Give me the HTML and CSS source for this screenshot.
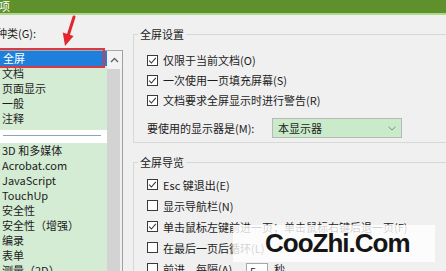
FILE: index.html
```html
<!DOCTYPE html>
<html lang="zh-CN">
<head>
<meta charset="utf-8">
<title>选项</title>
<link rel="stylesheet" href="styles.css">
</head>
<body>
<div class="titlebar"><span class="title">选项</span></div>
<div class="main">
  <div class="left">
    <div class="cat-label">种类(G):</div>
    <div class="listbox">
      <ul class="items">
        <li class="sel">全屏</li>
        <li>文档</li>
        <li>页面显示</li>
        <li>一般</li>
        <li>注释</li>
        <li class="sep"></li>
        <li>3D 和多媒体</li>
        <li>Acrobat.com</li>
        <li>JavaScript</li>
        <li>TouchUp</li>
        <li>安全性</li>
        <li>安全性（增强）</li>
        <li>编录</li>
        <li>表单</li>
        <li>测量（2D）</li>
      </ul>
      <div class="scrollbar">
        <div class="sb-up"><svg width="9" height="6" viewBox="0 0 9 6"><polyline points="1,5 4.5,1.5 8,5" fill="none" stroke="#606060" stroke-width="1.3"/></svg></div>
        <div class="sb-thumb"></div>
      </div>
    </div>
  </div>
  <div class="right">
    <fieldset class="group g1">
      <legend>全屏设置</legend>
      <div class="rows">
        <div class="row"><span class="cb"><svg width="11" height="11" viewBox="0 0 11 11"><rect x=".5" y=".5" width="10" height="10" fill="#fff" stroke="#3a3a3a"/><polyline points="2.2,5.6 4.4,8 8.8,2.8" fill="none" stroke="#3a3a3a" stroke-width="1.1"/></svg></span>仅限于当前文档(O)</div>
        <div class="row"><span class="cb"><svg width="11" height="11" viewBox="0 0 11 11"><rect x=".5" y=".5" width="10" height="10" fill="#fff" stroke="#3a3a3a"/><polyline points="2.2,5.6 4.4,8 8.8,2.8" fill="none" stroke="#3a3a3a" stroke-width="1.1"/></svg></span>一次使用一页填充屏幕(S)</div>
        <div class="row"><span class="cb"><svg width="11" height="11" viewBox="0 0 11 11"><rect x=".5" y=".5" width="10" height="10" fill="#fff" stroke="#3a3a3a"/><polyline points="2.2,5.6 4.4,8 8.8,2.8" fill="none" stroke="#3a3a3a" stroke-width="1.1"/></svg></span>文档要求全屏显示时进行警告(R)</div>
        <div class="row select-row">
          <span class="sel-label">要使用的显示器是(M):</span>
          <span class="dropdown"><span class="dd-text">本显示器</span><svg width="8" height="5" viewBox="0 0 8 5"><polyline points="0.5,0.8 4,4 7.5,0.8" fill="none" stroke="#8a8a8a" stroke-width="1"/></svg></span>
        </div>
      </div>
    </fieldset>
    <fieldset class="group g2">
      <legend>全屏导览</legend>
      <div class="rows">
        <div class="row"><span class="cb"><svg width="11" height="11" viewBox="0 0 11 11"><rect x=".5" y=".5" width="10" height="10" fill="#fff" stroke="#3a3a3a"/><polyline points="2.2,5.6 4.4,8 8.8,2.8" fill="none" stroke="#3a3a3a" stroke-width="1.1"/></svg></span>Esc 键退出(E)</div>
        <div class="row"><span class="cb"><svg width="11" height="11" viewBox="0 0 11 11"><rect x=".5" y=".5" width="10" height="10" fill="#fff" stroke="#3a3a3a"/></svg></span>显示导航栏(N)</div>
        <div class="row"><span class="cb"><svg width="11" height="11" viewBox="0 0 11 11"><rect x=".5" y=".5" width="10" height="10" fill="#fff" stroke="#3a3a3a"/><polyline points="2.2,5.6 4.4,8 8.8,2.8" fill="none" stroke="#3a3a3a" stroke-width="1.1"/></svg></span>单击鼠标左键前进一页；单击鼠标右键后退一页(F)</div>
        <div class="row"><span class="cb"><svg width="11" height="11" viewBox="0 0 11 11"><rect x=".5" y=".5" width="10" height="10" fill="#fff" stroke="#3a3a3a"/></svg></span>在最后一页后循环(L)</div>
        <div class="row"><span class="cb"><svg width="11" height="11" viewBox="0 0 11 11"><rect x=".5" y=".5" width="10" height="10" fill="#fff" stroke="#3a3a3a"/></svg></span><span class="adv-label">前进，每隔(A)</span><span class="spin">5</span><span>秒</span></div>
      </div>
    </fieldset>
  </div>
</div>
<svg class="arrow" width="100" height="60" viewBox="0 0 100 60">
  <line x1="74" y1="17" x2="68.6" y2="34" stroke="#e1262e" stroke-width="3" stroke-linecap="round"/>
  <polygon points="65,46 62.8,32.6 73.6,36" fill="#e1262e"/>
</svg>
<div class="redbox"></div>
<div class="watermark">CooZhi.Com</div>
</body>
</html>
```

FILE: styles.css
```css
html, body {
  margin: 0;
  padding: 0;
}
body {
  width: 446px;
  height: 271px;
  overflow: hidden;
  position: relative;
  background: #f0f0f0;
  font-family: "Noto Sans CJK SC", "Noto Sans", sans-serif;
  font-size: 11px;
  color: #1c1c1c;
}
.titlebar {
  height: 13px;
  background: #5e902b;
  border-bottom: 2px solid #b0d78c;
  overflow: hidden;
}
.title {
  display: block;
  margin-left: -12px;
  color: #fff;
  line-height: 13px;
  font-size: 11px;
}
.main {
  display: flex;
  align-items: flex-start;
}
.left {
  flex: none;
  width: 124px;
  margin-left: -1px;
}
.cat-label {
  margin-top: 10px;
  margin-left: -3px;
  line-height: 16px;
  height: 16px;
}
.listbox {
  margin-top: 9px;
  display: flex;
  border-top: 1px solid #a9a9a9;
  border-left: 1px solid #a9a9a9;
  border-right: 1px solid #a0a0a0;
  height: 240px;
}
.items {
  list-style: none;
  margin: 0;
  padding: 0;
  width: 107px;
  background: #d4ecd4;
}
.items li {
  height: 15px;
  line-height: 15px;
  padding-left: 2px;
  white-space: nowrap;
}
.items li.sel {
  background: #1f80dc;
  color: #fff;
  padding-left: 3px;
}
.items li.sep {
  height: 13px;
  margin-top: 4px;
  background: #fff;
  padding: 5px 6px 0 3px;
  box-sizing: border-box;
}
.items li.sep::before {
  content: "";
  display: block;
  border-top: 1px solid #8ea3b9;
}
.scrollbar {
  width: 15px;
  display: flex;
  flex-direction: column;
  background: #f0f0f0;
}
.sb-up {
  height: 18px;
  display: flex;
  align-items: center;
  justify-content: center;
  background: #f3f3f3;
}
.sb-thumb {
  flex: 1;
  background: #d3d3d3;
  margin-right: 2px;
}
.right {
  flex: none;
  width: 420px;
  margin-left: 10px;
  padding-top: 11px;
}
.group {
  margin: 0;
  border: 1px solid #d8d8d8;
  padding: 0 0 4px 4px;
  min-width: 0;
}
.group legend {
  padding: 0 2px;
  line-height: 16px;
  font-size: 11px;
}
.g2 {
  margin-top: 11px;
  padding-bottom: 0;
  border-bottom: none;
}
.rows {
  padding-left: 9px;
}
.g1 .rows {
  padding-top: 8px;
}
.g2 .rows {
  padding-top: 4px;
}
.row {
  display: flex;
  align-items: center;
  height: 20px;
  white-space: nowrap;
}
.g2 .row {
  height: 21px;
}
.cb {
  display: flex;
  width: 11px;
  height: 11px;
  margin-right: 5px;
  flex: none;
}
.select-row {
  margin-top: 8px;
}
.sel-label {
  width: 125px;
  flex: none;
}
.dropdown {
  display: flex;
  align-items: center;
  justify-content: space-between;
  box-sizing: border-box;
  width: 130px;
  height: 20px;
  border: 1px solid #b7b7b7;
  background: #c9ebca;
  padding: 0 5px 0 5px;
}
.dd-text {
  line-height: 18px;
}
.adv-label {
  width: 83px;
}
.spin {
  display: inline-block;
  box-sizing: border-box;
  width: 22px;
  height: 17px;
  border: 1px solid #a8a8a8;
  background: #fff;
  line-height: 15px;
  padding-left: 3px;
  margin-right: 6px;
  margin-top: 6px;
}
.arrow {
  position: absolute;
  left: 0;
  top: 0;
}
.redbox {
  position: absolute;
  left: -2px;
  top: 48px;
  width: 107px;
  height: 20px;
  box-sizing: border-box;
  border: 2px solid #d83a46;
}
.watermark {
  position: absolute;
  left: 233px;
  top: 225px;
  width: 202px;
  height: 37px;
  box-sizing: border-box;
  padding-left: 32px;
  background: rgba(255, 255, 255, 0.8);
  font-family: "Liberation Sans", Arial, sans-serif;
  font-weight: bold;
  font-size: 26px;
  letter-spacing: -1px;
  line-height: 37px;
  color: #151515;
}
```
